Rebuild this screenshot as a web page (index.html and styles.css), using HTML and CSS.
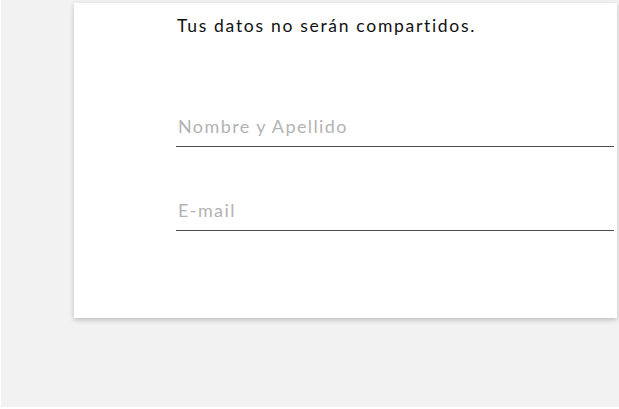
FILE: index.html
```html
<!DOCTYPE html>
<html lang="es">
<head>
<meta charset="utf-8">
<link rel="stylesheet" href="styles.css">
</head>
<body>
<div class="page">
  <div class="card">
    <p class="note">Tus datos no serán compartidos.</p>
    <form class="form">
      <input class="field" type="text" placeholder="Nombre y Apellido">
      <input class="field" type="email" placeholder="E-mail">
    </form>
  </div>
</div>
</body>
</html>
```
FILE: styles.css
```css
html, body {
  margin: 0;
  padding: 0;
  background: #ffffff;
}
.page {
  margin-left: 1px;
  height: 407px;
  background: #f2f2f2;
  padding: 3px 2px 0 73px;
  box-sizing: border-box;
}
.card {
  width: 543px;
  height: 315px;
  background: #ffffff;
  box-shadow: 0 2px 5px rgba(0, 0, 0, 0.22);
  padding: 0 2px 0 103px;
  box-sizing: border-box;
  font-family: "Lato", "Noto Sans", sans-serif;
}
.note {
  margin: 0;
  padding-top: 13px;
  font-size: 17.5px;
  line-height: 20px;
  letter-spacing: 1.7px;
  color: #111111;
}
.form {
  display: flex;
  flex-direction: column;
  gap: 52px;
  margin-top: 79px;
}
.field {
  display: block;
  width: 100%;
  box-sizing: border-box;
  border: none;
  border-bottom: 1px solid #4d4d4d;
  padding: 0 2px 9px;
  margin-left: -1px;
  font-family: inherit;
  font-size: 18px;
  line-height: 22px;
  letter-spacing: 1.4px;
  color: #333;
  background: transparent;
  outline: none;
}
.field::placeholder {
  color: #b3b3b3;
}
```
